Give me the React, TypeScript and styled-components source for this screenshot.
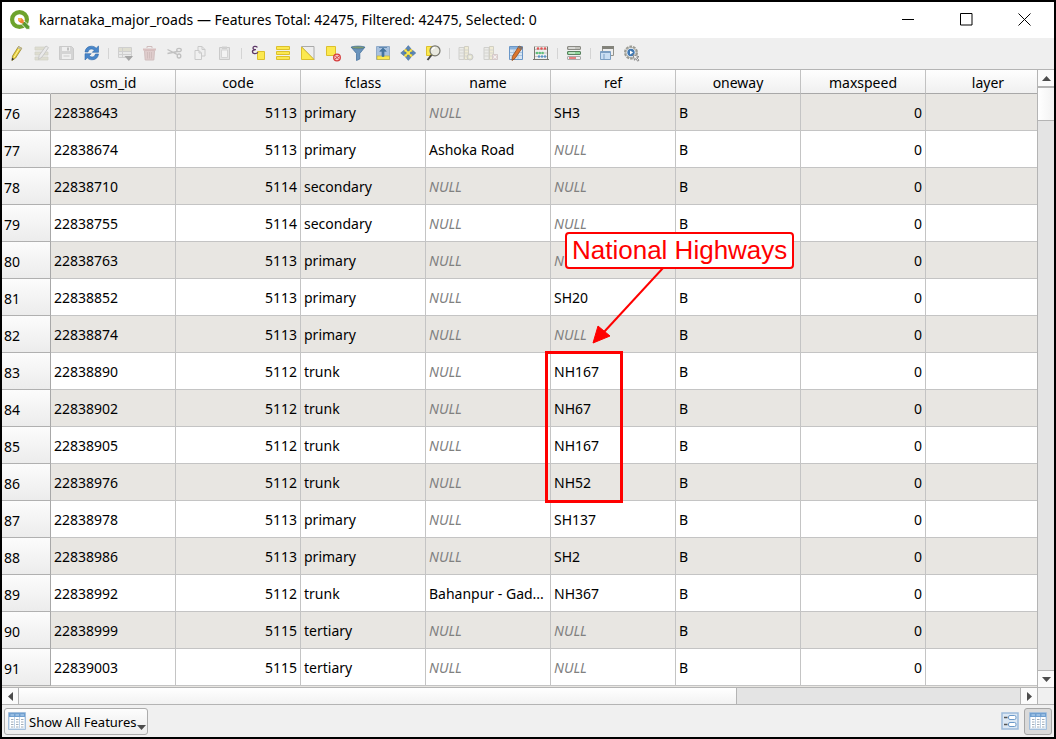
import React from "react";
import styled, { createGlobalStyle } from "styled-components";

const GlobalStyle = createGlobalStyle`
  * { box-sizing: border-box; }
  body {
    margin: 0;
    background: #000;
    color: #000;
    font-family: "Noto Sans", "Open Sans", sans-serif;
    font-size: 14px;
  }
  button { font: inherit; color: inherit; padding: 0; border: 0; background: none; }
  svg { display: block; }
`;

const Window = styled.div`
  height: 100vh;
  display: flex;
  flex-direction: column;
  border: 2px solid #000;
  background: #f0f0f0;
`;

const TitleBar = styled.header`
  flex: none;
  height: 36px;
  display: flex;
  align-items: center;
  padding-left: 8px;
  background: #fff;
`;

const Title = styled.h1`
  flex: 1;
  min-width: 0;
  margin: 0 0 0 9px;
  font-size: 14px;
  font-weight: 400;
  line-height: 20px;
  white-space: nowrap;
  overflow: hidden;
`;

const WindowButton = styled.button`
  width: 58px;
  height: 36px;
  display: flex;
  align-items: center;
  justify-content: center;
  padding: 0 1px 1px 0;
`;

const Toolbar = styled.div`
  flex: none;
  height: 31px;
  display: flex;
  align-items: center;
  padding-left: 2px;
  background: #efefef;
`;

const ToolButton = styled.button`
  width: 25px;
  height: 25px;
  display: flex;
  align-items: center;
  justify-content: center;

  &:disabled svg { opacity: 0.3; }
`;

const Separator = styled.span`
  width: 8px;
  height: 11px;
  display: flex;
  justify-content: center;

  &::before { content: ""; width: 1px; background: #d4d4d4; }
`;

const Body = styled.main`
  flex: 1;
  min-height: 0;
  display: flex;
  border-top: 1px solid #b4b4b4;
`;

const TableView = styled.div`
  position: relative;
  flex: 1;
  min-width: 0;
  overflow: hidden;
  background: #e8e6e2;
`;

const Table = styled.table`
  width: 1049px;
  table-layout: fixed;
  border-collapse: separate;
  border-spacing: 0;
  line-height: 20px;
`;

const Col = styled.col<{ $narrow?: boolean }>`
  width: ${(p) => (p.$narrow ? 49 : 125)}px;
`;

const ColumnHead = styled.th<{ $corner?: boolean }>`
  height: 24px;
  padding: 2px 0 0;
  font-weight: 400;
  text-align: center;
  border-bottom: 1px solid #a8a8a8;
  border-right: 1px solid ${(p) => (p.$corner ? "transparent" : "#c2c2c2")};
  background: linear-gradient(#fefefe, #f0f0f0);
`;

const Row = styled.tr<{ $shaded: boolean }>`
  background: ${(p) => (p.$shaded ? "#e8e6e2" : "#fff")};
`;

const RowHead = styled.th`
  height: 37px;
  padding: 4px 0 0 2px;
  font-weight: 400;
  text-align: left;
  border-right: 1px solid #a8a8a8;
  border-bottom: 1px solid #b0b0b0;
  background: linear-gradient(#fcfcfc, #ececec);
`;

const Cell = styled.td<{ $numeric?: boolean; $empty?: boolean }>`
  height: 37px;
  padding: 2px 3px 0;
  overflow: hidden;
  white-space: nowrap;
  text-overflow: ellipsis;
  text-align: ${(p) => (p.$numeric ? "right" : "left")};
  font-style: ${(p) => (p.$empty ? "italic" : "normal")};
  color: ${(p) => (p.$empty ? "#808080" : "#000")};
  border-right: 1px solid #c4c4c4;
  border-bottom: 1px solid #c4c4c4;
`;

const Callout = styled.div`
  position: absolute;
  left: 563px;
  top: 162px;
  padding: 0 5px;
  border: 2px solid #ff0000;
  border-radius: 4px;
  background: #fff;
  color: #ff0000;
  font: 26px/33px "Liberation Sans", Arial, sans-serif;
  white-space: nowrap;
`;

const CalloutArrow = styled.svg`
  position: absolute;
  left: 588px;
  top: 198px;
`;

const Highlight = styled.div`
  position: absolute;
  left: 543px;
  top: 281px;
  width: 78px;
  height: 152px;
  border: 3px solid #ff0000;
`;

const VerticalScroll = styled.div`
  flex: none;
  width: 17px;
  display: flex;
  flex-direction: column;
  border-left: 1px solid #b4b4b4;
  background: #e4e4e4;
`;

const HorizontalScroll = styled.div`
  flex: none;
  height: 18px;
  display: flex;
  border-top: 1px solid #b4b4b4;
  border-bottom: 1px solid #b4b4b4;
  background: #e4e4e4;
`;

const ScrollArrow = styled.button<{ $edge: "top" | "right" | "bottom" | "left" }>`
  flex: none;
  width: 17px;
  height: 17px;
  display: flex;
  align-items: center;
  justify-content: center;
  background: #fbfbfb;
  border-${(p) => p.$edge}: 1px solid #b4b4b4;

  ${HorizontalScroll} & { height: 16px; }
  ${VerticalScroll} & { width: 16px; }
`;

const VerticalThumb = styled.div`
  flex: none;
  height: 34px;
  border-top: 1px solid #b4b4b4;
  border-bottom: 1px solid #b4b4b4;
  background: linear-gradient(90deg, #fff, #f2f2f2);
`;

const HorizontalThumb = styled.div`
  flex: 718;
  border-right: 1px solid #b4b4b4;
  background: linear-gradient(#fff, #f2f2f2);
`;

const Trough = styled.div<{ $share: number }>`
  flex: ${(p) => p.$share};
`;

const ScrollCorner = styled.div`
  flex: none;
  width: 17px;
  border-left: 1px solid #b4b4b4;
  background: #f0f0f0;
`;

const StatusBar = styled.footer`
  flex: none;
  height: 32px;
  display: flex;
  align-items: center;
  padding: 0 2px;
`;

const FilterButton = styled.button`
  height: 27px;
  display: flex;
  align-items: center;
  padding: 0 1px 0 3px;
  border: 1px solid #acacac;
  border-radius: 3px;
  background: linear-gradient(#fdfdfd, #ececec);
  font-size: 13px;
  line-height: 18px;
  white-space: nowrap;

  span { margin-left: 3px; padding-top: 1px; }
  svg:last-child { align-self: flex-end; margin-bottom: 2px; }
`;

const ViewSwitch = styled.div`
  display: flex;
  margin-left: auto;
`;

const ViewButton = styled.button`
  width: 28px;
  height: 27px;
  display: flex;
  align-items: center;
  justify-content: center;
  border: 1px solid transparent;
  border-radius: 3px;

  &[aria-pressed="true"] { border-color: #a6a6a6; background: #dadada; }
`;

type IconProps = { children: React.ReactNode };
const Icon = ({ children }: IconProps) => (
  <svg width="17" height="17" viewBox="0 0 17 17" fill="none" aria-hidden="true">
    {children}
  </svg>
);

const YELLOW = "#fce94f";
const GOLD = "#dcc02c";
const BLUE = "#5b87b8";

type Tool = { label: string; disabled?: boolean; art: React.ReactNode };

const fieldTable = (
  <>
    <path d="M2 2.5h5v12H2z" fill="#e4e4da" stroke="#8a8a80" />
    <path d="M7.500 1.500h4v13h-4z" fill="#f3e79b" stroke="#8f8960" />
    <path d="M2 5h5M2 8h5M2 11h5M8 5h3M8 8h3M8 11h3" stroke="#99998c" />
  </>
);

const toolGroups: Tool[][] = [
  [
    {
      label: "Toggle editing mode",
      art: (
        <>
          <path d="M10.5 1.5 13.8 3.2 7.6 13 4 15.5 4.5 11z" fill="#e9cf3b" stroke="#96832a" strokeWidth=".8" />
          <path d="M12 2.4 6 12.4" stroke="#fff6a0" />
          <path d="m10.5 1.5 3.3 1.7-.9 1.5-3.3-1.8z" fill="#b9b9ae" />
          <path d="m3.6 15.8.5-3 2 1.2z" fill="#333" />
        </>
      ),
    },
    {
      label: "Toggle multi edit mode",
      disabled: true,
      art: (
        <>
          <path d="M2 2h12v3H2zM2 7h13v3H2zM2 12h13v3H2z" fill="#b9b58b" stroke="#8f8c6e" strokeWidth=".7" />
          <path d="m13 1 2.5 1.6L9 12l-3.5 2.5.6-4z" fill="#ddd" stroke="#666" strokeWidth=".9" />
        </>
      ),
    },
    {
      label: "Save edits",
      disabled: true,
      art: (
        <>
          <path d="M1.5 1.5h12l2 2v11h-14z" fill="#999" stroke="#777" />
          <path d="M4 2h8v4H4zM4 9h9v5H4z" fill="#f2f2f2" />
          <path d="M9 2.5h2v3H9z" fill="#555" />
          <path d="M5.5 11h6" stroke="#777" />
        </>
      ),
    },
    {
      label: "Reload the table",
      art: (
        <>
          <path d="M2 7C2.4 3.2 5 1.2 8.5 1.2c2 0 3.5.7 4.7 2L15.5 1v6.3H9.3l2-2C9 3.2 5.8 3.7 5 7z" fill="#4886ca" stroke="#2f68a8" strokeWidth=".6" />
          <path d="M15.500 9c-.4 3.8-3 5.8-6.500 5.8-2 0-3.500-.7-4.700-2L2 15V8.700h6.200l-2 2c2.300 2.100 5.500 1.600 6.300-1.700z" fill="#4886ca" stroke="#2f68a8" strokeWidth=".6" />
        </>
      ),
    },
  ],
  [
    {
      label: "Add feature",
      disabled: true,
      art: (
        <>
          <path d="M2.5 2.5h13v10h-13z" fill="#ddd" stroke="#888" />
          <path d="M3 3h12v3H3z" fill="#bcb98f" />
          <path d="M3 6.5h12M3 9.5h12M6.5 3v9" stroke="#888" />
          <path d="M8.5 11H17l-4.200 5z" fill="#000" />
        </>
      ),
    },
    {
      label: "Delete selected features",
      disabled: true,
      art: (
        <>
          <path d="M3.5 5.5h10l-.7 9.500H4.200z" fill="#bb7f7f" stroke="#8b4e4e" />
          <path d="M2 3.5h13v2H2z" fill="#a55" />
          <path d="M6 3V1.500h5V3M6.5 7v6.500M8.5 7v6.500M10.5 7v6.500" stroke="#8b4e4e" />
        </>
      ),
    },
    {
      label: "Cut",
      disabled: true,
      art: (
        <>
          <path d="M1.5 4.500 11 9.300M1.5 8.500 11.5 6.500" stroke="#555" strokeWidth="1.4" />
          <ellipse cx="13" cy="5" rx="2.3" ry="1.7" stroke="#555" strokeWidth="1.3" />
          <ellipse cx="13" cy="11" rx="1.8" ry="2" stroke="#555" strokeWidth="1.3" />
        </>
      ),
    },
    {
      label: "Copy",
      disabled: true,
      art: (
        <>
          <path d="M7 1.5h4l3 3V11H7z" fill="#eee" stroke="#777" />
          <path d="M4 5.5h4l2.500 2.500v6.500H4z" fill="#f5f5f5" stroke="#777" />
          <path d="M8 5.5V8h2.500M11 1.500v3h3" stroke="#777" />
        </>
      ),
    },
    {
      label: "Paste",
      disabled: true,
      art: (
        <>
          <path d="M3.5 2.5h10v12h-10z" fill="#ccc" stroke="#777" />
          <path d="M5.5 5h6v7.500h-6z" fill="#fff" stroke="#999" />
          <path d="M6 1.5h5v2.500H6z" fill="#888" />
        </>
      ),
    },
  ],
  [
    {
      label: "Select features using an expression",
      art: (
        <>
          <path d="M8.500 6.500h7v8h-7z" fill={YELLOW} stroke={GOLD} />
          <path d="M8.500 2.400C6.800.8 4 1.200 4 3c0 1.200 1.200 1.700 2.800 1.600C4.800 4.600 3.400 5.300 3.400 6.800c0 2.200 3.800 2.500 5.600.6" stroke="#5c3566" strokeWidth="1.3" />
        </>
      ),
    },
    {
      label: "Select all",
      art: (
        <path d="M2.500 1.500h13v3h-13zM2.500 6.500h13v3h-13zM2.500 11.500h13v3h-13z" fill={YELLOW} stroke={GOLD} />
      ),
    },
    {
      label: "Invert selection",
      art: (
        <>
          <path d="M2.500 1.500H15v13z" fill="#eee" stroke="#aaa" />
          <path d="M2.500 2v12.500H15z" fill={YELLOW} stroke={GOLD} />
        </>
      ),
    },
    {
      label: "Deselect all features",
      art: (
        <>
          <path d="M2.500 1.500h9v9h-9z" fill={YELLOW} stroke={GOLD} />
          <circle cx="13" cy="12.5" r="3.3" fill="#f6c8c8" stroke="#d53c3c" strokeWidth="1.3" />
          <path d="m11 10.500 4 4M11 14l4-3" stroke="#d53c3c" />
        </>
      ),
    },
    {
      label: "Filter features using form",
      art: (
        <>
          <path d="M2 2h14L10.800 8.500V14L7.500 15.500v-7z" fill="#6b94bd" stroke="#48739f" strokeWidth=".8" />
          <ellipse cx="9" cy="2.5" rx="6.5" ry="1.4" fill="#7d9a72" stroke="#48739f" strokeWidth=".7" />
        </>
      ),
    },
    {
      label: "Move selection to top",
      art: (
        <>
          <path d="M2.500 1.500h13v13h-13z" fill="#a8c1de" stroke="#8faac9" />
          <path d="M3 11h12.500v3.500H3z" fill={YELLOW} stroke="#c4b347" strokeWidth=".8" />
          <path d="M9 3 12.300 6.300H10v5.200H8V6.300H5.700zM5 2.500h8" fill="#45749f" stroke="#45749f" strokeWidth=".7" />
        </>
      ),
    },
    {
      label: "Pan map to selected rows",
      art: (
        <>
          <rect x="5.500" y="4.500" width="7.500" height="7" rx="1" fill={YELLOW} stroke={GOLD} />
          <path
            d="m9.300.6 2.700 3.200h-1.700v2.200h-2V3.800H6.600zM9.300 15.400 12 12.200h-1.700V10h-2v2.200H6.600zM1.700 8l3.200-2.700V7h2.200v2H4.900v1.700zM16.800 8l-3.200-2.700V7h-2.200v2h2.200v1.700z"
            fill={BLUE}
            stroke="#3e6a9b"
            strokeWidth=".5"
          />
        </>
      ),
    },
    {
      label: "Zoom map to selected rows",
      art: (
        <>
          <path d="M2.500 1.500h8v9h-8z" fill={YELLOW} stroke={GOLD} />
          <path d="m7.500 10-4 5" stroke="#444" strokeWidth="2" />
          <circle cx="11" cy="5.8" r="5" fill="#e9e9df" stroke="#77776f" strokeWidth="1.2" />
          <path d="M8 5a3.200 3.200 0 0 1 3-2.400" stroke="#fff" strokeWidth="1.2" />
        </>
      ),
    },
  ],
  [
    {
      label: "New field",
      disabled: true,
      art: (
        <>
          {fieldTable}
          <circle cx="13" cy="12" r="3" fill="#b8b86c" stroke="#777" />
          <path d="M13 10.500v3M11.500 12h3" stroke="#fff" />
        </>
      ),
    },
    {
      label: "Delete field",
      disabled: true,
      art: (
        <>
          {fieldTable}
          <path d="M10.500 9.500h5v5h-5z" fill="#c99" stroke="#977" />
          <path d="m11.500 10.500 3 3m0-3-3 3" stroke="#fff" />
        </>
      ),
    },
    {
      label: "Organize columns",
      art: (
        <>
          <path d="M2.500 1.500h13v13h-13z" fill="#d8e5f2" stroke="#6a97c8" />
          <path d="M3 2h12v2.500H3z" fill="#8ab1da" />
          <path d="M3 7.500h12M3 10.500h12M7 4v10M11 4v10" stroke="#a9c5e2" />
          <path d="M12 1 15.300 2.700 8 13.500 5 15.500l.3-4z" fill="#dc762e" stroke="#8d4a20" strokeWidth=".8" />
          <path d="m12 1 3.300 1.700-1.200 1.800-3.200-1.700z" fill="#777" />
        </>
      ),
    },
    {
      label: "Open field calculator",
      art: (
        <>
          <path d="M2.500 1.500v13M15.500 1.500v13M1 14.500h16" stroke="#77776f" />
          <path d="M2 1.500h14M3 4.500h12M3 8h12M3 11.500h12" stroke="#b4b4ac" strokeWidth=".7" />
          <g fill="#e05555">
            <circle cx="6" cy="3.500" r="1.300" /><circle cx="9.500" cy="3.500" r="1.300" /><circle cx="13" cy="3.500" r="1.300" />
          </g>
          <g fill="#5fc07a">
            <circle cx="5" cy="8" r="1.300" /><circle cx="7.800" cy="8" r="1.300" /><circle cx="10.600" cy="8" r="1.300" />
          </g>
          <g fill="#5b94c8">
            <circle cx="7" cy="11.500" r="1.200" /><circle cx="10" cy="11.500" r="1.200" /><circle cx="13" cy="11.500" r="1.200" />
          </g>
        </>
      ),
    },
  ],
  [
    {
      label: "Conditional formatting",
      art: (
        <>
          <rect x="2.500" y="1.500" width="13" height="3" rx=".5" fill="#c3c3bd" stroke="#8b8b85" />
          <rect x="2.500" y="6.500" width="13" height="3" rx=".5" fill="#8fd89a" stroke="#58805e" />
          <rect x="2.500" y="11.500" width="13" height="3" rx=".5" fill="#eee" stroke="#aaa" />
          <path d="M4 3h6M4 8h6" stroke="#eee" />
          <path d="M4 13h7" stroke="#d11" />
        </>
      ),
    },
  ],
  [
    {
      label: "Dock attribute table",
      art: (
        <>
          <path d="M4.500 1.500h11v9h-11z" fill="#eee" stroke="#92928a" />
          <path d="M4 1h12v3H4z" fill="#83837b" />
          <path d="M2.500 6.500h10v8h-10z" fill="#c9def3" stroke="#7c9fc3" />
          <path d="M2.500 7.500h10M6 9v5" stroke="#7c9fc3" />
        </>
      ),
    },
    {
      label: "Actions",
      art: (
        <>
          <circle cx="8" cy="7.5" r="6" stroke="#9a9a92" strokeWidth="2" strokeDasharray="2.700 1" />
          <circle cx="8" cy="7.5" r="5" fill="#fff" stroke="#a4a49c" />
          <circle cx="8" cy="7.5" r="3.700" fill="#4179b3" />
          <path d="m7 5.500 3.200 2L7 9.500z" fill="#fff" />
          <path d="m10 9.500 6 2.300-2.300.8 2.300 2.600-1.300 1-2-2.700-1.200 1.800z" fill="#eee" stroke="#777" strokeWidth=".8" />
        </>
      ),
    },
  ],
];

const TableIcon = () => (
  <svg width="18" height="18" viewBox="0 0 18 18" fill="none" aria-hidden="true">
    <path d="M.5.5h17v17H.5z" fill="#d6e4f2" stroke="#a3bfdc" />
    <path d="M2 2h14v14H2z" fill="#fff" />
    <path d="M1 1h16v4H1z" fill="#6f9fd0" />
    <path d="M2.500 3H6M7.500 3H11M12.500 3H16" stroke="#a7c8e8" strokeWidth="1.5" />
    <path d="M6.500 5v11M11.500 5v11" stroke="#bfd3e8" />
    <path d="M3 7.500h2.500M8 7.500h2.500M13 7.500h2.500M3 10h2.500M8 10h2.500M13 10h2.500M3 12.500h2.500M8 12.500h2.500M13 12.500h2.500M3 15h2.500M8 15h2.500M13 15h2.500" stroke="#9eabb8" />
  </svg>
);

const FormIcon = () => (
  <svg width="18" height="18" viewBox="0 0 18 18" fill="none" aria-hidden="true">
    <path d="M1 1h16v16H1z" fill="#dce8f4" stroke="#9dbbda" strokeWidth="1.5" />
    <path d="M3 5.500h3.500M3 12.500h3.500" stroke="#555" strokeWidth="1.5" />
    <rect x="7.500" y="3.500" width="7.500" height="4" rx="1.500" fill="#fff" stroke="#6d9ac9" />
    <rect x="7.500" y="10.500" width="7.500" height="4" rx="1.500" fill="#fff" stroke="#6d9ac9" />
  </svg>
);

const Logo = () => (
  <svg width="20" height="20" viewBox="0 0 20 20" fill="none" aria-hidden="true">
    <circle cx="9.500" cy="9.500" r="7.400" fill="#fff" stroke="#6da32c" strokeWidth="4.200" />
    <path d="M12 11.500h3l4.800 4.800v3h-3.300L12 14.500z" fill="#5b9a2f" stroke="#fff" strokeWidth=".8" />
    <path d="M8.300 8h3.200l2.200 2.200v3H11L8.300 11z" fill="#ef8233" />
    <path d="M8.300 8h3.200l-.3 2.500-2.900.5z" fill="#f6b94c" />
  </svg>
);

const arrowPaths = {
  top: "M0 7 4.500 2 9 7z",
  bottom: "M0 2h9L4.500 7z",
  left: "M7 0v9L2 4.500z",
  right: "M2 0v9l5-4.500z",
};

const Triangle = ({ to }: { to: keyof typeof arrowPaths }) => (
  <svg width="9" height="9" viewBox="0 0 9 9" aria-hidden="true">
    <path d={arrowPaths[to]} fill="#4c4c4c" />
  </svg>
);

const columns = ["osm_id", "code", "fclass", "name", "ref", "oneway", "maxspeed", "layer"];

type Feature = [row: number, id: string, code: number, fclass: string, name: string | null, ref: string | null];

const features: Feature[] = [
  [76, "22838643", 5113, "primary", null, "SH3"],
  [77, "22838674", 5113, "primary", "Ashoka Road", null],
  [78, "22838710", 5114, "secondary", null, null],
  [79, "22838755", 5114, "secondary", null, null],
  [80, "22838763", 5113, "primary", null, null],
  [81, "22838852", 5113, "primary", null, "SH20"],
  [82, "22838874", 5113, "primary", null, null],
  [83, "22838890", 5112, "trunk", null, "NH167"],
  [84, "22838902", 5112, "trunk", null, "NH67"],
  [85, "22838905", 5112, "trunk", null, "NH167"],
  [86, "22838976", 5112, "trunk", null, "NH52"],
  [87, "22838978", 5113, "primary", null, "SH137"],
  [88, "22838986", 5113, "primary", null, "SH2"],
  [89, "22838992", 5112, "trunk", "Bahanpur - Gad...", "NH367"],
  [90, "22838999", 5115, "tertiary", null, null],
  [91, "22839003", 5115, "tertiary", null, null],
];

const TextCell = ({ value }: { value: string | null }) => (
  <Cell $empty={value === null}>{value ?? "NULL"}</Cell>
);

export default function App() {
  return (
    <Window>
      <GlobalStyle />
      <TitleBar>
        <Logo />
        <Title>karnataka_major_roads — Features Total: 42475, Filtered: 42475, Selected: 0</Title>
        <WindowButton aria-label="Minimize">
          <svg width="13" height="13" viewBox="0 0 13 13"><path d="M0 6.500h12" stroke="#000" /></svg>
        </WindowButton>
        <WindowButton aria-label="Maximize">
          <svg width="13" height="13" viewBox="0 0 13 13"><path d="M.5.5H12V12H.5z" fill="none" stroke="#000" /></svg>
        </WindowButton>
        <WindowButton aria-label="Close">
          <svg width="13" height="13" viewBox="0 0 13 13"><path d="m.5.5 12 12m0-12-12 12" stroke="#000" /></svg>
        </WindowButton>
      </TitleBar>

      <Toolbar role="toolbar" aria-label="Attribute table">
        {toolGroups.map((group, index) => (
          <React.Fragment key={index}>
            {index > 0 && <Separator />}
            {group.map((tool) => (
              <ToolButton key={tool.label} aria-label={tool.label} disabled={tool.disabled}>
                <Icon>{tool.art}</Icon>
              </ToolButton>
            ))}
          </React.Fragment>
        ))}
      </Toolbar>

      <Body>
        <TableView>
          <Table>
            <colgroup>
              <Col $narrow />
              {columns.map((name) => <Col key={name} />)}
            </colgroup>
            <thead>
              <tr>
                <ColumnHead as="td" $corner />
                {columns.map((name) => <ColumnHead key={name} scope="col">{name}</ColumnHead>)}
              </tr>
            </thead>
            <tbody>
              {features.map(([row, id, code, fclass, name, ref]) => (
                <Row key={row} $shaded={row % 2 === 0}>
                  <RowHead scope="row">{row}</RowHead>
                  <Cell>{id}</Cell>
                  <Cell $numeric>{code}</Cell>
                  <Cell>{fclass}</Cell>
                  <TextCell value={name} />
                  <TextCell value={ref} />
                  <Cell>B</Cell>
                  <Cell $numeric>0</Cell>
                  <Cell />
                </Row>
              ))}
            </tbody>
          </Table>
          <Highlight />
          <CalloutArrow width="80" height="80" viewBox="0 0 80 80" aria-hidden="true">
            <path d="M73 0 14 64" stroke="#ff0000" strokeWidth="2" />
            <path d="M3 75 8 58l12 10z" fill="#ff0000" stroke="#ff0000" strokeLinejoin="round" />
          </CalloutArrow>
          <Callout>National Highways</Callout>
        </TableView>
        <VerticalScroll>
          <ScrollArrow $edge="bottom" aria-label="Scroll up"><Triangle to="top" /></ScrollArrow>
          <VerticalThumb />
          <Trough $share={1} />
          <ScrollArrow $edge="top" aria-label="Scroll down"><Triangle to="bottom" /></ScrollArrow>
        </VerticalScroll>
      </Body>

      <HorizontalScroll>
        <ScrollArrow $edge="right" aria-label="Scroll left"><Triangle to="left" /></ScrollArrow>
        <HorizontalThumb />
        <Trough $share={284} />
        <ScrollArrow $edge="left" aria-label="Scroll right"><Triangle to="right" /></ScrollArrow>
        <ScrollCorner />
      </HorizontalScroll>

      <StatusBar>
        <FilterButton aria-haspopup="menu">
          <TableIcon />
          <span>Show All Features</span>
          <Triangle to="bottom" />
        </FilterButton>
        <ViewSwitch>
          <ViewButton aria-label="Form view" aria-pressed="false"><FormIcon /></ViewButton>
          <ViewButton aria-label="Table view" aria-pressed="true"><TableIcon /></ViewButton>
        </ViewSwitch>
      </StatusBar>
    </Window>
  );
}
